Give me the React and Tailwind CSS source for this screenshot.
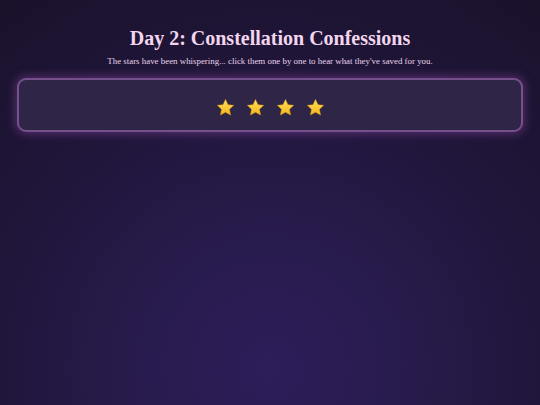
import React from 'react';

const Star = () => (
  <svg viewBox="0 0 24 24" className="w-[19px] h-[19px]">
    <defs>
      <linearGradient id="sg" x1="0" y1="0" x2="0" y2="1">
        <stop offset="0" stopColor="#ffe15a" />
        <stop offset="1" stopColor="#f5b51e" />
      </linearGradient>
    </defs>
    <path
      d="M12 1.8l3.1 6.6 7.2.9-5.3 5 1.4 7.1L12 17.9l-6.4 3.5 1.4-7.1-5.3-5 7.2-.9z"
      fill="url(#sg)"
      stroke="#e0a010"
      strokeWidth="0.6"
      strokeLinejoin="round"
    />
  </svg>
);

export default function App() {
  return (
    <div
      className="w-[540px] h-[405px] overflow-hidden bg-[radial-gradient(circle_at_50%_91%,#2e1d5a_0%,#281b4c_30%,#20163b_60%,#1a122b_100%)] px-[17px] pt-[26px]"
      style={{ fontFamily: '"Liberation Serif", "DejaVu Serif", serif' }}
    >
      <h1 className="text-center text-[20px] font-bold leading-6 text-[#f3d6ee]">
        Day 2: Constellation Confessions
      </h1>
      <p className="mt-[5px] text-center text-[8.9px] leading-3 text-[#e8d2ea]">
        The stars have been whispering... click them one by one to hear what they&apos;ve saved for you.
      </p>
      <div className="mt-[11px] h-[54px] pt-[5px] rounded-[9px] border-2 border-[#76508c] bg-[#2f2647] shadow-[0_0_10px_2px_rgba(160,80,180,0.4)] flex items-center justify-center gap-[11px]">
        <Star />
        <Star />
        <Star />
        <Star />
      </div>
    </div>
  );
}
